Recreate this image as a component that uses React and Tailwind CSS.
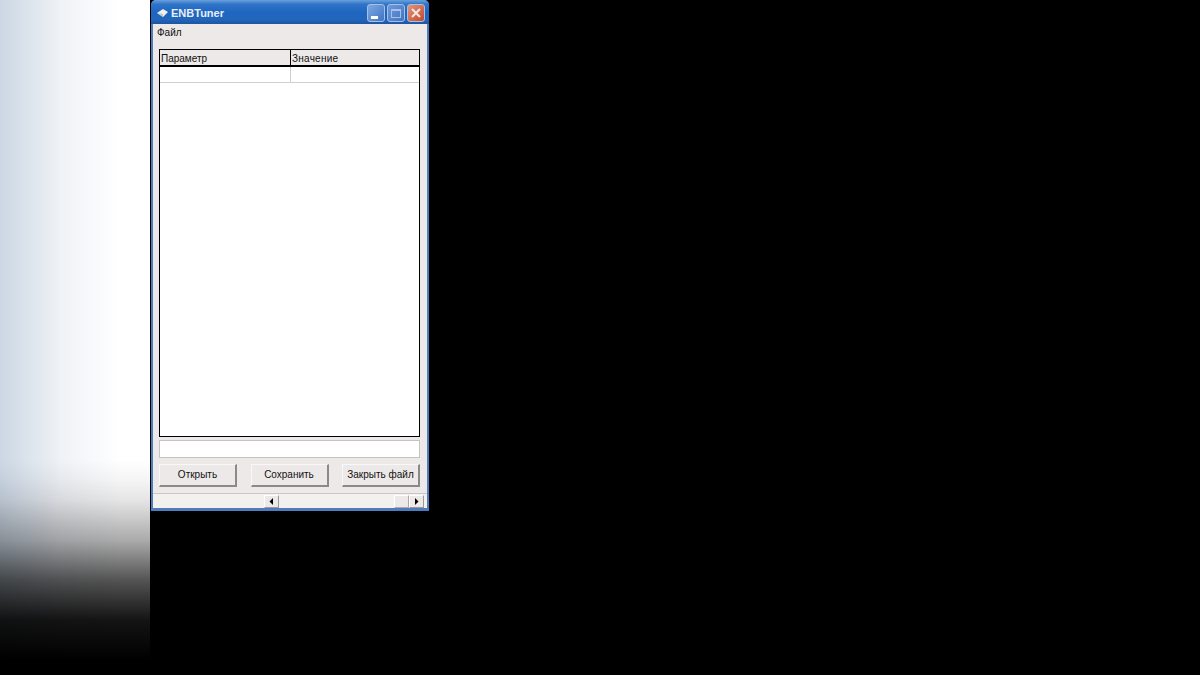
import React from "react";

function WinBtn({ className, children }) {
  return (
    <div className={`w-[18px] h-[18px] rounded-[3px] border border-[#a9c0e6] flex items-center justify-center ${className}`}>
      {children}
    </div>
  );
}

function PushBtn({ children }) {
  return (
    <div className="w-[78px] h-[23px] flex items-center justify-center bg-[#ece9e8] border border-[#f8f8f8] border-r-[#8a8a8a] border-b-[#8a8a8a] border-r-2 border-b-2 text-[10px] text-[#111] leading-none">
      {children}
    </div>
  );
}

function ScrollArrow({ dir }) {
  return (
    <div className="w-[15px] h-[13px] bg-[#ece9e8] border border-[#fff] border-r-[#999] border-b-[#999] flex items-center justify-center">
      <svg width="5" height="7" viewBox="0 0 5 7">
        {dir === "left" ? <path d="M4 0v7L0.5 3.5z" fill="#000" /> : <path d="M1 0v7l3.5-3.5z" fill="#000" />}
      </svg>
    </div>
  );
}

export default function App() {
  return (
    <div className="w-[1200px] h-[675px] bg-black flex items-start overflow-hidden font-['Liberation_Sans',sans-serif]">
      <div className="w-[150px] h-[675px] shrink-0 bg-gradient-to-r from-[#cbd7e4] via-[#eff2f6] via-40% to-white to-80%">
        <div className="w-full h-full bg-[linear-gradient(to_bottom,rgba(0,0,0,0)_0,rgba(0,0,0,0)_460px,rgba(0,0,0,0.04)_480px,rgba(0,0,0,0.1)_500px,rgba(0,0,0,0.33)_540px,rgba(0,0,0,0.67)_580px,rgba(0,0,0,0.92)_620px,#000_660px)]" />
      </div>
      <div className="ml-px w-[278px] h-[511px] shrink-0 flex flex-col rounded-t-[5px] overflow-hidden bg-[#4f7cbc]">
        <div className="h-[24px] shrink-0 flex items-center pt-[2px] pl-[4px] pr-[4px] bg-[linear-gradient(to_bottom,#6aa0dc_0,#2f74c8_18%,#1f66c0_50%,#2266bc_80%,#1d55a0_100%)]">
          <svg width="13" height="12" viewBox="0 0 13 12" className="ml-[1px]">
            <path d="M1 6l6-4 5 3-5 5z" fill="#f0f0f0" />
            <path d="M1 6l6 4V7z" fill="#b8c4d8" />
          </svg>
          <span className="ml-[2px] text-[11px] font-bold text-[#e8eef8] leading-none">ENBTuner</span>
          <div className="ml-auto flex gap-[2px]">
            <WinBtn className="bg-[linear-gradient(135deg,#7fa8e0,#3f74c4)]">
              <div className="w-[7px] h-[3px] bg-white mt-[9px] mr-[3px]" />
            </WinBtn>
            <WinBtn className="bg-[linear-gradient(135deg,#6f9ad8,#3f74c4)]">
              <div className="w-[10px] h-[9px] border border-[#a9c0e6] border-t-2" />
            </WinBtn>
            <WinBtn className="bg-[linear-gradient(135deg,#e0967c,#c4482c)]">
              <svg width="12" height="12" viewBox="0 0 12 12">
                <path d="M2 2l8 8M10 2l-8 8" stroke="#f6e8e4" strokeWidth="2" />
              </svg>
            </WinBtn>
          </div>
        </div>
        <div className="flex-1 min-h-0 mx-[2px] mb-[3px] bg-[#ece9e8] flex flex-col">
          <div className="h-[18px] shrink-0 flex items-center pl-[4px] text-[10px] text-[#111] leading-none">Файл</div>
          <div className="flex-1 min-h-0 flex flex-col pl-[6px] pr-[7px] pt-[7px]">
            <div className="h-[388px] shrink-0 bg-white border border-black">
              <div className="h-[17px] flex border-b-2 border-black bg-[#ece9e8] text-[10px] text-[#111] leading-none">
                <div className="w-[131px] flex items-center pl-[1px] pt-[2px] border-r border-black">Параметр</div>
                <div className="flex-1 flex items-center pl-[1px] pt-[2px] tracking-[0.25px]">Значение</div>
              </div>
              <div className="h-[16px] flex border-b border-[#d0d0d0]">
                <div className="w-[131px] border-r border-[#d0d0d0]" />
              </div>
            </div>
            <div className="h-[18px] shrink-0 mt-[3px] bg-white border border-[#c4c4c4]" />
            <div className="mt-[6px] flex justify-between">
              <PushBtn>Открыть</PushBtn>
              <PushBtn>Сохранить</PushBtn>
              <PushBtn>Закрыть файл</PushBtn>
            </div>
          </div>
          <div className="h-[15px] shrink-0 flex items-center border-t border-[#c8c8c8] bg-[#f3f1ee]">
            <div className="ml-[111px]"><ScrollArrow dir="left" /></div>
            <div className="ml-auto w-[15px] h-[13px] bg-[#ece9e8] border border-white border-r-[#aaa] border-b-[#aaa]" />
            <div className="mr-[3px]"><ScrollArrow dir="right" /></div>
          </div>
        </div>
      </div>
    </div>
  );
}
